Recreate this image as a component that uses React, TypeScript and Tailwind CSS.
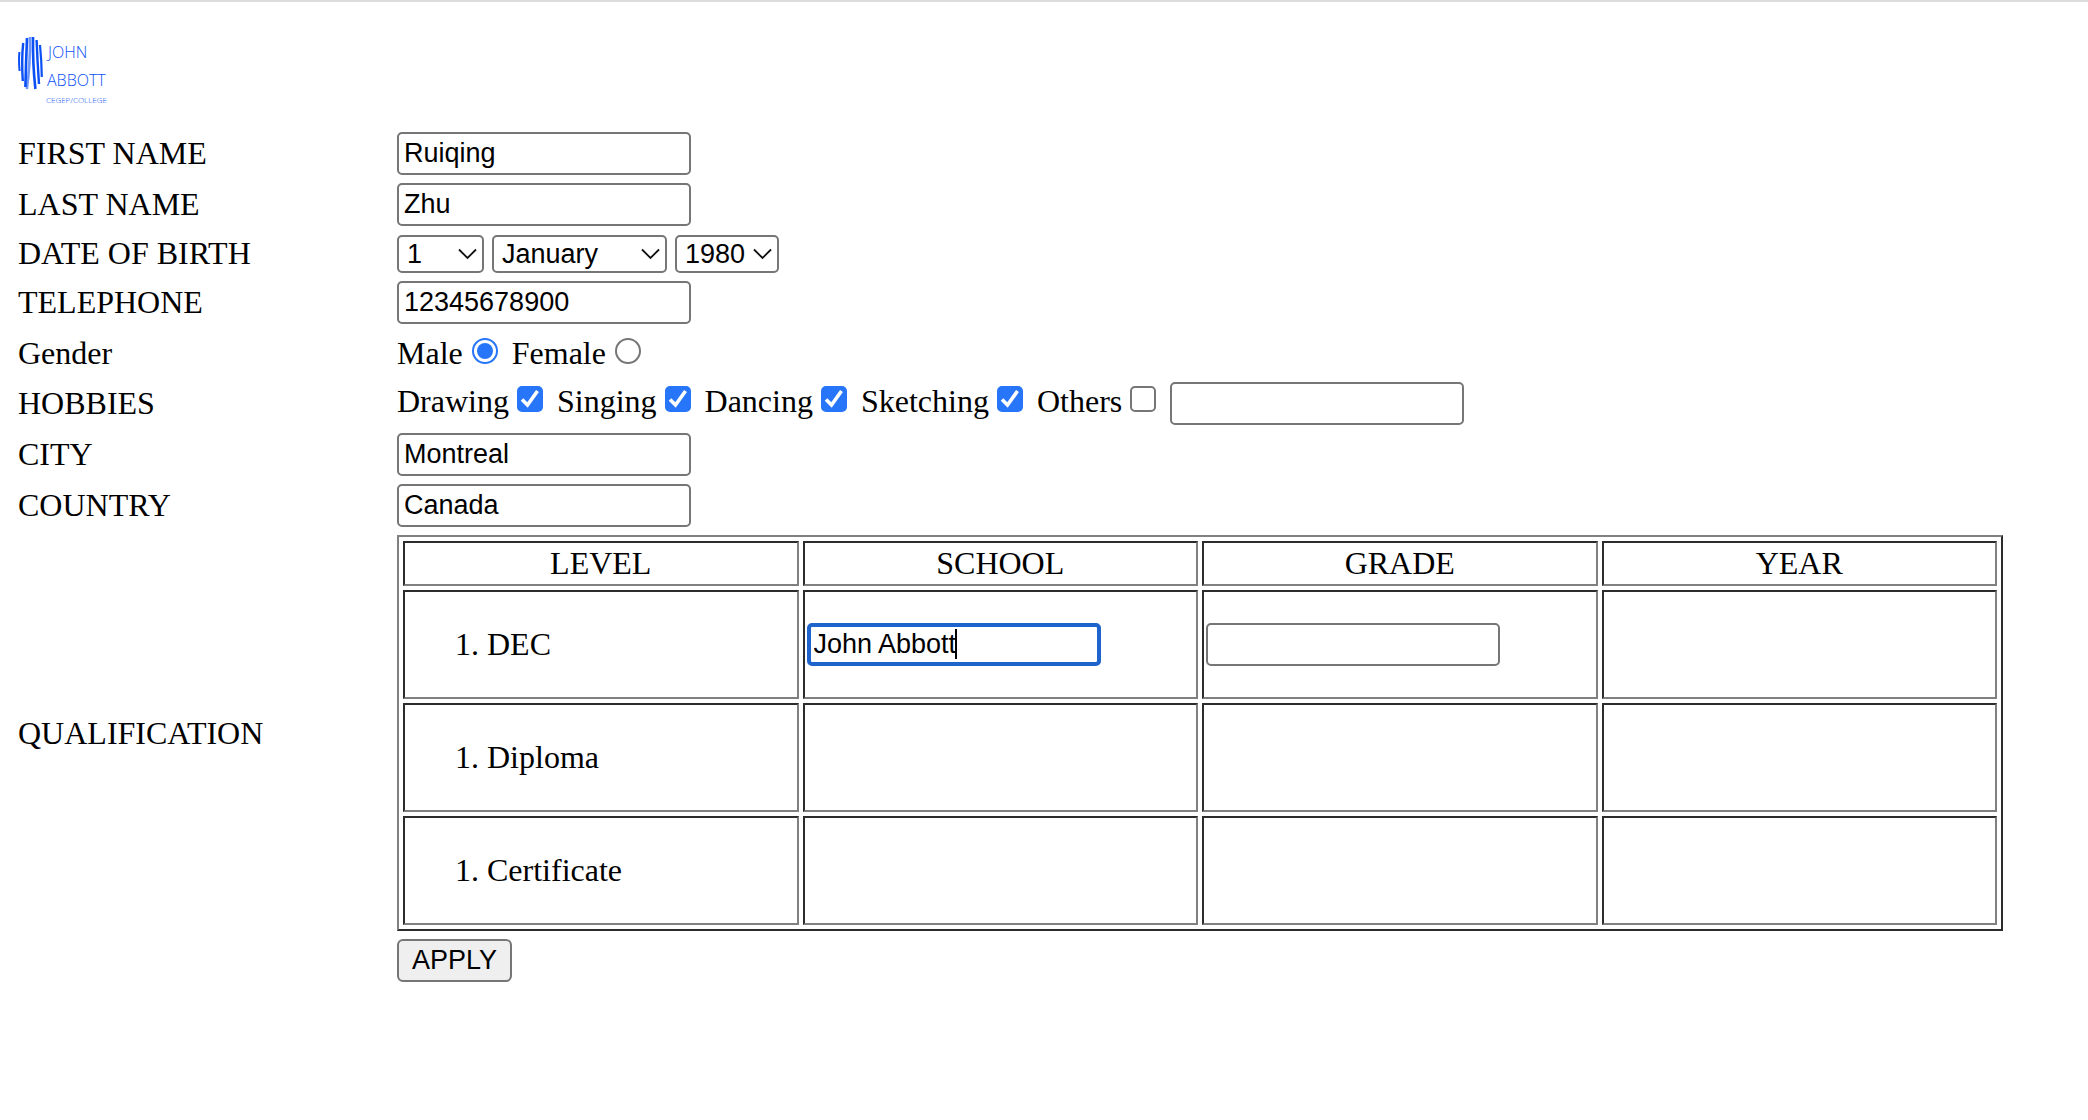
import { useState } from "react";
import type { ReactNode } from "react";

const textBox =
  "h-[43px] w-[294px] rounded-[5px] border-2 border-[#767676] bg-white px-[5px] text-[27px] leading-[31px] font-['Liberation_Sans',Arial,sans-serif] outline-none";

function Row({ label, htmlFor, children }: { label: string; htmlFor?: string; children: ReactNode }) {
  return (
    <div className="grid grid-cols-[379px_1fr] items-center">
      {htmlFor ? <label htmlFor={htmlFor}>{label}</label> : <span>{label}</span>}
      <div>{children}</div>
    </div>
  );
}

function TextRow({ id, label, value }: { id: string; label: string; value: string }) {
  return (
    <Row label={label} htmlFor={id}>
      <input id={id} type="text" defaultValue={value} className={`block ${textBox}`} />
    </Row>
  );
}

function Select({ label, options, className }: { label: string; options: string[]; className: string }) {
  return (
    <div className={`relative ${className}`}>
      <select
        aria-label={label}
        className="block h-[38px] w-full appearance-none rounded-[5px] border-2 border-[#767676] bg-white pl-2 text-[27px] leading-[31px] font-['Liberation_Sans',Arial,sans-serif]"
      >
        {options.map((option) => (
          <option key={option}>{option}</option>
        ))}
      </select>
      <svg
        className="pointer-events-none absolute top-[13px] right-[7px] h-3 w-[19px]"
        viewBox="0 0 19 12"
        fill="none"
        stroke="#111"
        strokeWidth="1.8"
      >
        <path d="M1 1.5 9.5 10 18 1.5" />
      </svg>
    </div>
  );
}

function Radio({ label, checked, onChange }: { label: string; checked: boolean; onChange: () => void }) {
  return (
    <label className="mr-3.5 flex items-baseline">
      {label}
      <input
        type="radio"
        name="gender"
        checked={checked}
        onChange={onChange}
        className="ml-[9px] size-[26px] appearance-none rounded-full border-2 border-[#767676] bg-clip-content p-[3px] checked:border-[#2775f8] checked:bg-[#2775f8]"
      />
    </label>
  );
}

function Hobby({ label, checked }: { label: string; checked: boolean }) {
  return (
    <label className="mr-3.5 flex items-baseline">
      {label}
      <span className="relative ml-2 flex items-baseline">
        <input
          type="checkbox"
          defaultChecked={checked}
          className="peer size-[26px] appearance-none rounded-[5px] border-2 border-[#767676] bg-white checked:border-[#2775f8] checked:bg-[#2775f8]"
        />
        <svg
          className="pointer-events-none absolute inset-0 hidden size-[26px] peer-checked:block"
          viewBox="0 0 26 26"
          fill="none"
          stroke="#fff"
          strokeWidth="3.6"
        >
          <path d="M5 13.5 10.5 19 20.5 5" />
        </svg>
      </span>
    </label>
  );
}

function Logo() {
  return (
    <svg className="block h-[74px] w-[100px]" viewBox="0 0 100 74" role="img" aria-label="John Abbott CEGEP/College">
      <g fill="none" stroke="#0b50f5">
        <path strokeWidth="2" d="M1.4 18Q.6 27 1.6 37" />
        <path strokeWidth="2.4" d="M5.2 9Q3.4 26 4.8 47" />
        <path strokeWidth="2.6" d="M9 4Q8 28 7.4 53" />
        <path strokeWidth="2.6" d="M12 3Q12.400 30 8.800 55" opacity="0.6" />
        <path strokeWidth="2.6" d="M15 3Q14.6 30 17.4 55" />
        <path strokeWidth="2.4" d="M18.6 6Q19.4 28 21 50" />
        <path strokeWidth="2.2" d="M22 11Q23.6 27 23.8 43" />
      </g>
      <g fill="#0b50f5" fontFamily="'Open Sans',sans-serif" fontWeight="300">
        <text x="30" y="24" fontSize="16">JOHN</text>
        <text x="29" y="52" fontSize="16">ABBOTT</text>
        <text x="28" y="69" fontSize="8">CEGEP/COLLEGE</text>
      </g>
    </svg>
  );
}

const cell =
  "border-2 border-t-[#2c2c2c] border-r-[#808080] border-b-[#808080] border-l-[#2c2c2c] p-0.5";

function Qualifications() {
  return (
    <table className="w-full table-fixed border-separate border-spacing-1 border-2 border-t-[#808080] border-r-[#2c2c2c] border-b-[#2c2c2c] border-l-[#808080]">
      <thead>
        <tr>
          {["LEVEL", "SCHOOL", "GRADE", "YEAR"].map((heading) => (
            <th key={heading} scope="col" className={`${cell} font-normal`}>
              {heading}
            </th>
          ))}
        </tr>
      </thead>
      <tbody>
        {["DEC", "Diploma", "Certificate"].map((level, i) => (
          <tr key={level}>
            <td className={cell}>
              <ol className="my-8 list-decimal pl-20">
                <li>{level}</li>
              </ol>
            </td>
            <td className={cell}>
              {i === 0 && (
                <div className="relative">
                  <input
                    type="text"
                    aria-label="School"
                    defaultValue="John Abbott"
                    className="block h-[43px] w-[294px] rounded-[5px] border-4 border-[#1f63cc] bg-white px-[3px] text-[27px] leading-[31px] font-['Liberation_Sans',Arial,sans-serif] outline-none"
                  />
                  <span className="pointer-events-none absolute top-1.5 left-[148px] h-[30px] w-0.5 bg-black" />
                </div>
              )}
            </td>
            <td className={cell}>
              {i === 0 && <input type="text" aria-label="Grade" className={`block ${textBox}`} />}
            </td>
            <td className={cell} />
          </tr>
        ))}
      </tbody>
    </table>
  );
}

export default function App() {
  const [gender, setGender] = useState("Male");
  return (
    <main className="min-h-screen border-t-2 border-[#dcdcdc] bg-white pt-8 pr-[85px] pb-8 pl-[18px] font-['Liberation_Serif','Times_New_Roman',serif] text-[32px] leading-[37px] text-black">
      <Logo />
      <form className="mt-6 flex flex-col gap-2" onSubmit={(e) => e.preventDefault()}>
        <TextRow id="first-name" label="FIRST NAME" value="Ruiqing" />
        <TextRow id="last-name" label="LAST NAME" value="Zhu" />
        <Row label="DATE OF BIRTH">
          <div className="flex gap-2 pt-px">
            <Select label="Day" options={["1", "2", "3"]} className="w-[87px]" />
            <Select label="Month" options={["January", "February", "March"]} className="w-[175px]" />
            <Select label="Year" options={["1980", "1981", "1982"]} className="w-[104px]" />
          </div>
        </Row>
        <TextRow id="telephone" label="TELEPHONE" value="12345678900" />
        <Row label="Gender">
          <div className="flex h-[42px] items-center">
            {["Male", "Female"].map((g) => (
              <Radio key={g} label={g} checked={gender === g} onChange={() => setGender(g)} />
            ))}
          </div>
        </Row>
        <Row label="HOBBIES">
          <div className="flex items-baseline">
            <Hobby label="Drawing" checked />
            <Hobby label="Singing" checked />
            <Hobby label="Dancing" checked />
            <Hobby label="Sketching" checked />
            <Hobby label="Others" checked={false} />
            <input type="text" aria-label="Other hobbies" className={textBox} />
          </div>
        </Row>
        <TextRow id="city" label="CITY" value="Montreal" />
        <TextRow id="country" label="COUNTRY" value="Canada" />
        <Row label="QUALIFICATION">
          <Qualifications />
        </Row>
        <div className="grid grid-cols-[379px_1fr]">
          <button
            type="submit"
            className="col-start-2 h-[43px] justify-self-start rounded-md border-2 border-[#767676] bg-[#efefef] px-[13px] text-[27px] leading-[31px] font-['Liberation_Sans',Arial,sans-serif]"
          >
            APPLY
          </button>
        </div>
      </form>
    </main>
  );
}
